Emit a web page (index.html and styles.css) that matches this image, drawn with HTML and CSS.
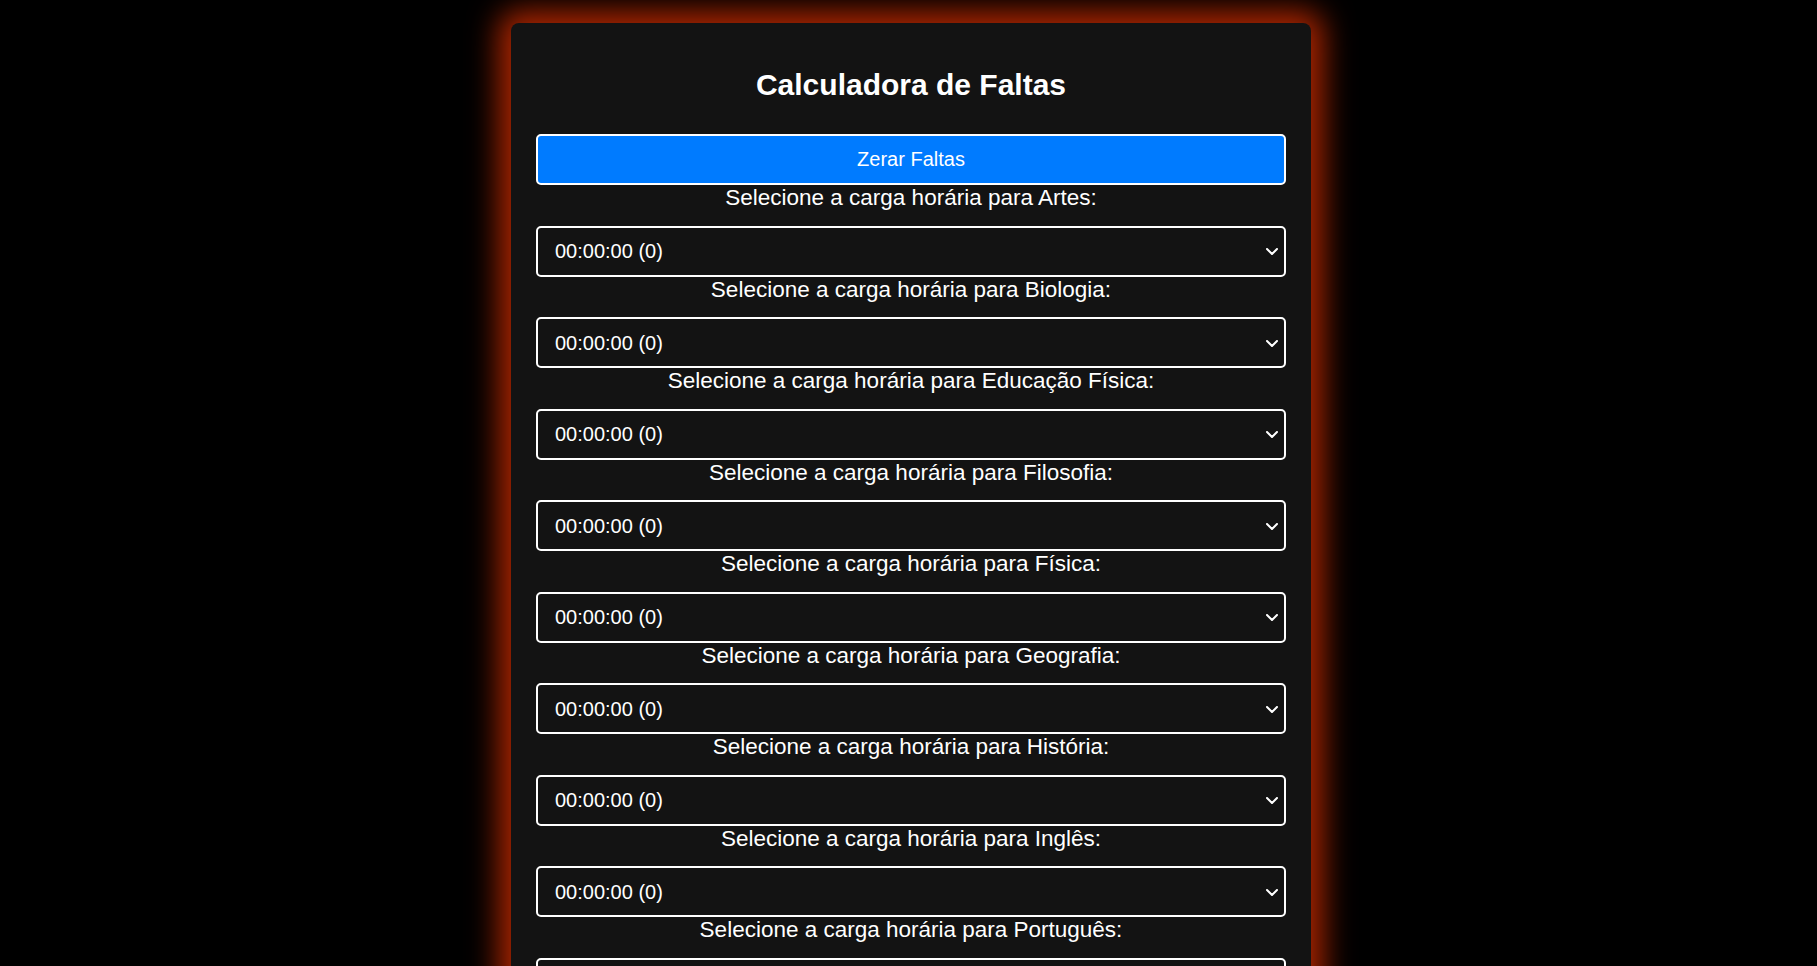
FILE: index.html
```html
<!DOCTYPE html>
<html lang="pt-BR">
<head>
<meta charset="utf-8">
<title>Calculadora de Faltas</title>
<link rel="stylesheet" href="styles.css">
</head>
<body>
<div class="card">
  <h2 class="title">Calculadora de Faltas</h2>
  <button class="reset" type="button">Zerar Faltas</button>

  <label class="field-label">Selecione a carga horária para Artes:</label>
  <div class="select-wrap"><select class="hours"><option>00:00:00 (0)</option></select><svg class="chevron" viewBox="0 0 12 7" width="12" height="7"><path d="M1 1 L6 6 L11 1" fill="none" stroke="#fff" stroke-width="2" stroke-linecap="round" stroke-linejoin="round"/></svg></div>

  <label class="field-label">Selecione a carga horária para Biologia:</label>
  <div class="select-wrap"><select class="hours"><option>00:00:00 (0)</option></select><svg class="chevron" viewBox="0 0 12 7" width="12" height="7"><path d="M1 1 L6 6 L11 1" fill="none" stroke="#fff" stroke-width="2" stroke-linecap="round" stroke-linejoin="round"/></svg></div>

  <label class="field-label">Selecione a carga horária para Educação Física:</label>
  <div class="select-wrap"><select class="hours"><option>00:00:00 (0)</option></select><svg class="chevron" viewBox="0 0 12 7" width="12" height="7"><path d="M1 1 L6 6 L11 1" fill="none" stroke="#fff" stroke-width="2" stroke-linecap="round" stroke-linejoin="round"/></svg></div>

  <label class="field-label">Selecione a carga horária para Filosofia:</label>
  <div class="select-wrap"><select class="hours"><option>00:00:00 (0)</option></select><svg class="chevron" viewBox="0 0 12 7" width="12" height="7"><path d="M1 1 L6 6 L11 1" fill="none" stroke="#fff" stroke-width="2" stroke-linecap="round" stroke-linejoin="round"/></svg></div>

  <label class="field-label">Selecione a carga horária para Física:</label>
  <div class="select-wrap"><select class="hours"><option>00:00:00 (0)</option></select><svg class="chevron" viewBox="0 0 12 7" width="12" height="7"><path d="M1 1 L6 6 L11 1" fill="none" stroke="#fff" stroke-width="2" stroke-linecap="round" stroke-linejoin="round"/></svg></div>

  <label class="field-label">Selecione a carga horária para Geografia:</label>
  <div class="select-wrap"><select class="hours"><option>00:00:00 (0)</option></select><svg class="chevron" viewBox="0 0 12 7" width="12" height="7"><path d="M1 1 L6 6 L11 1" fill="none" stroke="#fff" stroke-width="2" stroke-linecap="round" stroke-linejoin="round"/></svg></div>

  <label class="field-label">Selecione a carga horária para História:</label>
  <div class="select-wrap"><select class="hours"><option>00:00:00 (0)</option></select><svg class="chevron" viewBox="0 0 12 7" width="12" height="7"><path d="M1 1 L6 6 L11 1" fill="none" stroke="#fff" stroke-width="2" stroke-linecap="round" stroke-linejoin="round"/></svg></div>

  <label class="field-label">Selecione a carga horária para Inglês:</label>
  <div class="select-wrap"><select class="hours"><option>00:00:00 (0)</option></select><svg class="chevron" viewBox="0 0 12 7" width="12" height="7"><path d="M1 1 L6 6 L11 1" fill="none" stroke="#fff" stroke-width="2" stroke-linecap="round" stroke-linejoin="round"/></svg></div>

  <label class="field-label">Selecione a carga horária para Português:</label>
  <div class="select-wrap"><select class="hours"><option>00:00:00 (0)</option></select><svg class="chevron" viewBox="0 0 12 7" width="12" height="7"><path d="M1 1 L6 6 L11 1" fill="none" stroke="#fff" stroke-width="2" stroke-linecap="round" stroke-linejoin="round"/></svg></div>

  <label class="field-label">Selecione a carga horária para Química:</label>
  <div class="select-wrap"><select class="hours"><option>00:00:00 (0)</option></select><svg class="chevron" viewBox="0 0 12 7" width="12" height="7"><path d="M1 1 L6 6 L11 1" fill="none" stroke="#fff" stroke-width="2" stroke-linecap="round" stroke-linejoin="round"/></svg></div>
</div>
</body>
</html>
```

FILE: styles.css
```css
html, body {
  margin: 0;
  padding: 0;
  background: #000;
}

body {
  font-family: "Liberation Sans", Arial, sans-serif;
  color: #fff;
  padding: 23px 0 40px 5px;
}

.card {
  box-sizing: border-box;
  width: 800px;
  margin: 0 auto;
  padding: 25px;
  background: #131313;
  border-radius: 8px;
  box-shadow: 0 0 30px 12px rgba(230, 50, 0, 0.75);
}

.title {
  margin: 19px 0 32px;
  font-size: 30px;
  line-height: 35px;
  font-weight: bold;
  text-align: center;
}

.reset {
  display: block;
  box-sizing: border-box;
  width: 100%;
  height: 51px;
  margin: 0;
  border: 2px solid #fff;
  border-radius: 5px;
  background: #007bff;
  color: #fff;
  font-family: "Liberation Sans", Arial, sans-serif;
  font-size: 20px;
}

.field-label {
  display: block;
  font-size: 22.5px;
  line-height: 26px;
  text-align: center;
  margin-bottom: 14.5px;
}

.select-wrap {
  position: relative;
}

.hours {
  display: block;
  box-sizing: border-box;
  width: 100%;
  height: 51px;
  margin: 0;
  padding: 0 40px 0 17px;
  border: 2px solid #fff;
  border-radius: 5px;
  background: #131313;
  color: #fff;
  font-family: "Liberation Sans", Arial, sans-serif;
  font-size: 20px;
  -webkit-appearance: none;
  appearance: none;
}

.chevron {
  position: absolute;
  right: 8px;
  top: 50%;
  margin-top: -3px;
  pointer-events: none;
}
```
